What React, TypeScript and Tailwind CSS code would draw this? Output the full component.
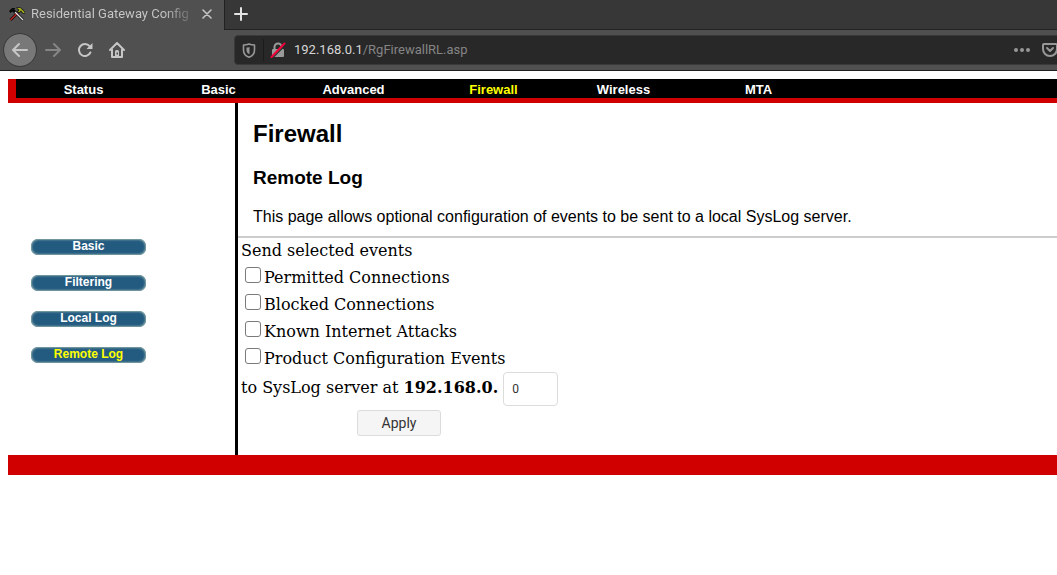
import { useState } from "react";

const navItems = [
  { label: "Status", active: false },
  { label: "Basic", active: false },
  { label: "Advanced", active: false },
  { label: "Firewall", active: true },
  { label: "Wireless", active: false },
  { label: "MTA", active: false },
];

const sideItems = [
  { label: "Basic", active: false },
  { label: "Filtering", active: false },
  { label: "Local Log", active: false },
  { label: "Remote Log", active: true },
];

const events = [
  "Permitted Connections",
  "Blocked Connections",
  "Known Internet Attacks",
  "Product Configuration Events",
];

function ToolsIcon() {
  return (
    <svg width="16" height="16" viewBox="0 0 16 16" aria-hidden="true">
      <path d="M1.500 14 9 6.500M14 14 6 6" stroke="#101010" strokeWidth="2.600" />
      <path d="M1.500 14 8.500 7" stroke="#c81e1e" strokeWidth="1.200" />
      <path d="M14 14 6 6" stroke="#e0e0e0" strokeWidth="1.200" />
      <path d="M0 5 3 2h3v1H5l2 2-2 2-1.500-1.500L1.500 7z" fill="#0a0a0a" />
      <path d="M7 1.500h4.500l2.500 2L16 6v1.500h-2.500L12 5.500 10 7.500 8 5.500l1.500-1.500z" fill="#0a0a0a" />
      <path d="M8 2h3.500l2 2L15.500 6v1H14l-2-2.500-2 2L9 5.500 10.500 4z" fill="#a3b01c" />
    </svg>
  );
}

function BackIcon() {
  return (
    <svg width="16" height="16" viewBox="0 0 16 16" fill="none" stroke="currentColor" strokeWidth="2" strokeLinecap="round" strokeLinejoin="round" aria-hidden="true">
      <path d="M15 8H1.5M7 2 1 8l6 6" />
    </svg>
  );
}

function ForwardIcon() {
  return (
    <svg width="16" height="16" viewBox="0 0 16 16" fill="none" stroke="currentColor" strokeWidth="2" strokeLinecap="round" strokeLinejoin="round" aria-hidden="true">
      <path d="M1 8h13.5M9 2l6 6-6 6" />
    </svg>
  );
}

function ReloadIcon() {
  return (
    <svg width="16" height="16" viewBox="0 0 16 16" fill="none" aria-hidden="true">
      <path d="M13.4 10.5A6 6 0 1 1 12.6 4.2" stroke="currentColor" strokeWidth="2" strokeLinecap="round" />
      <path d="M15.5 1v5.4a.6.6 0 0 1-.6.6H9.5z" fill="currentColor" />
    </svg>
  );
}

function HomeIcon() {
  return (
    <svg width="16" height="16" viewBox="0 0 16 16" fill="none" stroke="currentColor" strokeWidth="2" strokeLinecap="round" strokeLinejoin="round" aria-hidden="true">
      <path d="M1 8 8 1l7 7M3 7.500V15h10V7.500" />
      <path d="M6 15V9.500A1.500 1.500 0 0 1 7.500 8h1A1.500 1.500 0 0 1 10 9.500V15z" fill="currentColor" stroke="none" />
      <path d="M7.500 10.500h1.500v2H7.500z" fill="#505050" stroke="none" />
    </svg>
  );
}

function ShieldIcon() {
  return (
    <svg width="14" height="15" viewBox="0 0 14 15" fill="none" aria-hidden="true">
      <path d="M7 1C5 1.800 3.200 2 1.500 2v5c0 3.600 2 6 5.500 7.200 3.500-1.200 5.500-3.600 5.500-7.200V2C10.800 2 9 1.800 7 1z" stroke="currentColor" strokeWidth="1.600" strokeLinejoin="round" />
      <path d="M7.500 4v7.200C5.300 10.200 4.500 9 4.500 7V4.600c1.200 0 2-.2 3-.6z" fill="currentColor" />
    </svg>
  );
}

function InsecureIcon() {
  return (
    <svg width="16" height="16" viewBox="0 0 16 16" fill="none" aria-hidden="true">
      <path d="M4.500 8V5a3.500 3.500 0 0 1 7 0v3" stroke="#9a9a9a" strokeWidth="2" />
      <rect x="2" y="7" width="12" height="8" rx="1" fill="#9a9a9a" />
      <path d="M2 16.500 15.500 3" stroke="#282828" strokeWidth="1.200" />
      <path d="M1.500 15 14.500 1.500" stroke="#f00038" strokeWidth="2" strokeLinecap="round" />
    </svg>
  );
}

function PocketIcon() {
  return (
    <svg width="16" height="14" viewBox="0 0 16 14" fill="none" stroke="currentColor" strokeWidth="2" strokeLinecap="round" strokeLinejoin="round" aria-hidden="true">
      <path d="M2 1h12a1 1 0 0 1 1 1v4a7 7 0 0 1-14 0V2a1 1 0 0 1 1-1z" />
      <path d="m5 5 3 3 3-3" />
    </svg>
  );
}

function BrowserChrome() {
  return (
    <header className="overflow-hidden border-b border-[#1f1f1f] bg-[#505050] font-[Roboto,sans-serif] text-[13px]">
      <div className="flex h-[30px]">
        <div className="flex w-56 shrink-0 items-center pb-0.5 pl-[9px] text-[#c4c4c4]">
          <ToolsIcon />
          <span className="ml-1.5 w-[165px] whitespace-nowrap bg-linear-to-r from-[#c8c8c8] from-80% to-[#585858] bg-clip-text text-transparent">
            Residential Gateway Config
          </span>
          <button type="button" aria-label="Close tab" className="ml-1.5">
            <svg width="10" height="10" viewBox="0 0 10 10" stroke="currentColor" strokeWidth="1.6" strokeLinecap="round" aria-hidden="true">
              <path d="m1 1 8 8M9 1 1 9" />
            </svg>
          </button>
        </div>
        <div className="flex flex-1 items-center border-b border-l border-[#222] bg-[#373737] pb-0.5 pl-[9px] text-[#e4e4e4]">
          <button type="button" aria-label="New tab">
            <svg width="14" height="14" viewBox="0 0 14 14" stroke="currentColor" strokeWidth="2" strokeLinecap="round" aria-hidden="true">
              <path d="M7 1v12M1 7h12" />
            </svg>
          </button>
        </div>
      </div>
      <div className="flex h-10 items-center pl-1 text-[#c6c6c6]">
        <button type="button" aria-label="Back" className="flex size-8 items-center justify-center rounded-full bg-[#787878] outline outline-[#3c3c3c]">
          <BackIcon />
        </button>
        <button type="button" aria-label="Forward" className="ml-[9px] text-[#858585]">
          <ForwardIcon />
        </button>
        <button type="button" aria-label="Reload" className="ml-4">
          <ReloadIcon />
        </button>
        <button type="button" aria-label="Home" className="ml-4">
          <HomeIcon />
        </button>
        <div className="-mr-4 ml-[109px] flex h-[30px] flex-1 items-center rounded border border-[#3a3a3a] bg-[#282828] pl-[7px] text-[#979797]">
          <ShieldIcon />
          <span className="ml-[7px] h-[22px] w-px bg-[#1c1c1c]" />
          <span className="ml-1.5">
            <InsecureIcon />
          </span>
          <span className="ml-2 flex-1 text-[#858585]">
            <span className="text-[#d6d6d6]">192.168.0.1</span>/RgFirewallRL.asp
          </span>
          <button type="button" aria-label="Page actions" className="mr-3">
            <svg width="16" height="4" viewBox="0 0 16 4" fill="currentColor" aria-hidden="true">
              <circle cx="2" cy="2" r="2" />
              <circle cx="8" cy="2" r="2" />
              <circle cx="14" cy="2" r="2" />
            </svg>
          </button>
          <button type="button" aria-label="Save to Pocket" className="mr-3.5">
            <PocketIcon />
          </button>
        </div>
      </div>
    </header>
  );
}

function TopNav() {
  return (
    <div className="border-b-[5px] border-l-8 border-[#d00000] bg-black">
      <nav className="flex h-[19px] items-center pt-0.5 text-[13px] leading-4 font-bold">
        {navItems.map((item) => (
          <a
            key={item.label}
            href="#"
            className={item.active ? "w-[135px] pl-2.5 text-center text-[#ffff00]" : "w-[135px] text-center text-white"}
          >
            {item.label}
          </a>
        ))}
      </nav>
    </div>
  );
}

function SideNav() {
  return (
    <nav className="flex w-[230px] shrink-0 flex-col gap-5 border-r-[3px] border-black pt-[136px] pl-[23px]">
      {sideItems.map((item) => (
        <a
          key={item.label}
          href="#"
          className={
            item.active
              ? "h-4 w-[115px] rounded-[7px] bg-[#235b80] text-center text-xs leading-[14px] font-bold text-[#ffff00] inset-shadow-[0_0_2px_1px_#8aa9a9]"
              : "h-4 w-[115px] rounded-[7px] bg-[#235b80] text-center text-xs leading-[14px] font-bold text-white inset-shadow-[0_0_2px_1px_#8aa9a9]"
          }
        >
          {item.label}
        </a>
      ))}
    </nav>
  );
}

function EventForm() {
  const [host, setHost] = useState("0");
  return (
    <form
      onSubmit={(e) => e.preventDefault()}
      className="border-t-2 border-[#ccc] pt-[3px] pb-[19px] pl-[3px] font-['DejaVu_Serif',serif]"
    >
      <fieldset>
        <legend className="leading-5">Send selected events</legend>
        {events.map((name) => (
          <label key={name} className="flex h-[27px] items-start gap-[3px] pl-1 leading-[34px]">
            <input
              type="checkbox"
              className="mt-1.5 size-4 shrink-0 appearance-none rounded-[3px] border border-[#7a7a7a] bg-white checked:bg-[#235b80]"
            />
            {name}
          </label>
        ))}
      </fieldset>
      <div className="mt-[3px] flex items-center">
        <label htmlFor="host" className="pb-0.5">
          to SysLog server at <b>192.168.0.</b>
        </label>
        <input
          id="host"
          type="text"
          value={host}
          onChange={(e) => setHost(e.target.value)}
          className="ml-[5px] h-[34px] w-[55px] rounded border border-[#dcdcdc] bg-white px-2 font-[Roboto,sans-serif] text-xs text-[#333]"
        />
      </div>
      <button
        type="submit"
        className="mt-1 ml-[116px] block h-[26px] w-[84px] rounded-[3px] border border-[#dcdcdc] bg-[#f5f5f5] font-[Roboto,sans-serif] text-sm leading-5 text-[#333]"
      >
        Apply
      </button>
    </form>
  );
}

export default function App() {
  return (
    <div className="min-h-screen overflow-x-hidden bg-white text-black">
      <BrowserChrome />
      <div className="mt-2 ml-2 font-['Liberation_Sans',sans-serif]">
        <TopNav />
        <div className="flex">
          <SideNav />
          <main className="min-w-0 flex-1">
            <div className="px-[15px] pt-[17px] pb-2.5">
              <h1 className="text-2xl leading-7 font-bold">Firewall</h1>
              <h2 className="mt-[19px] text-[19px] leading-[22px] font-bold">Remote Log</h2>
              <p className="mt-[19px] leading-[18px]">
                This page allows optional configuration of events to be sent to a local SysLog server.
              </p>
            </div>
            <EventForm />
          </main>
        </div>
        <footer className="h-5 bg-[#d00000]" />
      </div>
    </div>
  );
}
